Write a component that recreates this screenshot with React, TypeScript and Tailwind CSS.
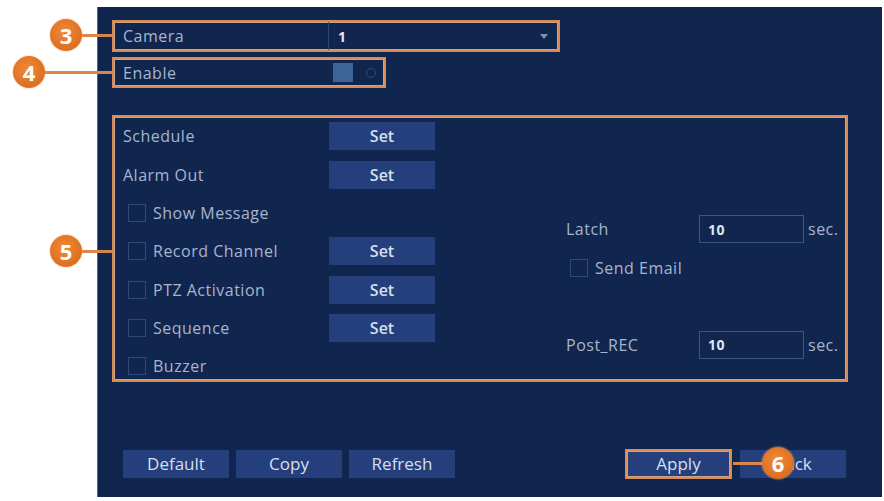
import React from "react";

const font = { fontFamily: '"Open Sans", "Noto Sans", sans-serif' };

function SetButton({ label = "Set", className = "" }: { label?: string; className?: string }) {
  return (
    <div
      className={`w-[106px] h-[28px] bg-[#243f7b] flex items-center justify-center text-[16px] text-[#d6dfee] ${className}`}
    >
      {label}
    </div>
  );
}

function Check() {
  return <div className="w-[18px] h-[18px] border border-[#30497a] shrink-0" />;
}

function Callout({ n, className }: { n: string; className: string }) {
  return (
    <div
      className={`absolute w-[32px] h-[32px] rounded-full bg-[radial-gradient(circle_at_45%_40%,#f08a36,#dc6f22_70%,#e9995c)] flex items-center justify-center text-white text-[22px] font-bold shadow-[0_0_2px_#f3b07a] ${className}`}
    >
      {n}
    </div>
  );
}

function Line({ className }: { className: string }) {
  return <div className={`absolute h-[3px] bg-[#d9854c] ${className}`} />;
}

const orangeBox = "border-2 border-[#d98b54] shadow-[inset_0_0_0_1px_#c7a48b]";

export default function App() {
  const leftRows = [
    { label: "Schedule", check: false, set: true },
    { label: "Alarm Out", check: false, set: true },
    { label: "Show Message", check: true, set: false },
    { label: "Record Channel", check: true, set: true },
    { label: "PTZ Activation", check: true, set: true },
    { label: "Sequence", check: true, set: true },
    { label: "Buzzer", check: true, set: false },
  ];

  return (
    <div className="relative w-[884px] h-[501px] bg-white overflow-hidden pt-[7px] pl-[97px]" style={font}>
      <div className="w-[785px] h-[490px] bg-[#10264f] border-l border-[#4d648f] flex flex-col pt-[13px] pl-[14px] text-[16px] font-medium tracking-[0.5px] text-[#a8b5cd]">
        {/* Camera */}
        <div className={`w-[448px] h-[32px] flex items-center ${orangeBox}`}>
          <div className="w-[214px] pl-[9px]">Camera</div>
          <div className="h-full w-px bg-[#2c4575]" />
          <div className="flex-1 flex items-center justify-between pl-[9px] pr-[10px]">
            <span className="font-bold text-[#e3e9f3] text-[14px]">1</span>
            <span className="w-0 h-0 border-l-[4px] border-r-[4px] border-t-[5px] border-l-transparent border-r-transparent border-t-[#7f92b4]" />
          </div>
        </div>

        {/* Enable */}
        <div className={`mt-[5px] w-[274px] h-[31px] flex items-center ${orangeBox}`}>
          <div className="w-[219px] pl-[9px]">Enable</div>
          <div className="w-[20px] h-[19px] bg-[#3a6596]" />
          <div className="ml-[13px] w-[10px] h-[10px] rounded-full border border-[#324c78]" />
        </div>

        {/* Section 5 */}
        <div className={`mt-[27px] w-[736px] h-[267px] flex ${orangeBox}`}>
          <div className="w-[450px] flex flex-col gap-[10.5px] pt-[5px] pl-[9px]">
            {leftRows.map((r) => (
              <div key={r.label} className="h-[28px] flex items-center">
                <div className="w-[206px] flex items-center">
                  {r.check && <div className="ml-[5px] mr-[7px]"><Check /></div>}
                  <span>{r.label}</span>
                </div>
                {r.set && <SetButton className="font-semibold tracking-normal" />}
              </div>
            ))}
          </div>
          <div className="flex flex-col pt-[98px] gap-[10.5px] pl-[2px]">
            <div className="h-[28px] flex items-center">
              <span className="w-[133px]">Latch</span>
              <div className="w-[105px] h-[28px] border border-[#3b5585] flex items-center pl-[8px] font-bold text-[14px] text-[#dfe6f1]">10</div>
              <span className="ml-[4px]">sec.</span>
            </div>
            <div className="h-[28px] flex items-center pl-[4px]">
              <Check />
              <span className="ml-[7px]">Send Email</span>
            </div>
            <div className="h-[28px]" />
            <div className="h-[28px] flex items-center">
              <span className="w-[133px]">Post_REC</span>
              <div className="w-[105px] h-[28px] border border-[#3b5585] flex items-center pl-[8px] font-bold text-[14px] text-[#dfe6f1]">10</div>
              <span className="ml-[4px]">sec.</span>
            </div>
          </div>
        </div>

        {/* Bottom buttons */}
        <div className="mt-[67px] flex items-center pl-[11px] pr-[36px] tracking-normal">
          <SetButton label="Default" className="text-[17px]" />
          <SetButton label="Copy" className="ml-[7px] text-[17px]" />
          <SetButton label="Refresh" className="ml-[7px] text-[17px]" />
          <div className="flex-1" />
          <div className={`w-[107px] h-[30px] bg-[#243f7b] flex items-center justify-center text-[17px] text-[#d6dfee] ${orangeBox}`}>
            Apply
          </div>
          <SetButton label="Back" className="ml-[8px] text-[17px]" />
        </div>
      </div>

      {/* Callouts */}
      <Line className="left-[80px] w-[32px] top-[34px]" />
      <Callout n="3" className="left-[50px] top-[19px]" />
      <Line className="left-[44px] w-[68px] top-[71px]" />
      <Callout n="4" className="left-[13px] top-[56px]" />
      <Line className="left-[80px] w-[32px] top-[250px]" />
      <Callout n="5" className="left-[50px] top-[235px]" />
      <Line className="left-[733px] w-[30px] top-[462px]" />
      <Callout n="6" className="left-[762px] top-[447px]" />
    </div>
  );
}
